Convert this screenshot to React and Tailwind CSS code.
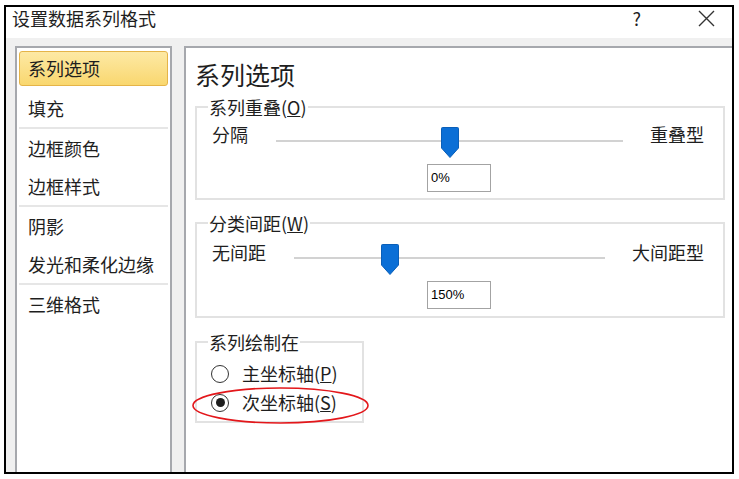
const font = { fontFamily: '"Noto Sans CJK SC", "Noto Sans", sans-serif' }

function Thumb() {
  return (
    <svg width="18" height="31" viewBox="0 0 18 31" className="block">
      <path d="M1.5 0.5 H16.5 Q17.5 0.5 17.5 1.5 V21 L9 30.5 L0.5 21 V1.5 Q0.5 0.5 1.5 0.5Z" fill="#0b6fd6" stroke="#0a5fb8" strokeWidth="1" />
    </svg>
  )
}

function Slider({ left, right, pos, lineTop, thumbTop, gapL, gapR }) {
  return (
    <div className="flex items-start pl-[15px] pr-[19px] text-[18px] leading-[24px] text-[#1e1e1e]">
      <span>{left}</span>
      <div className="relative flex-1 h-[24px]" style={{ marginLeft: gapL, marginRight: gapR }}>
        <div className="absolute left-0 right-0 h-[2px] bg-[#d2d2d2]" style={{ top: lineTop }} />
        <div className="absolute -translate-x-1/2" style={{ left: pos, top: thumbTop }}>
          <Thumb />
        </div>
      </div>
      <span>{right}</span>
    </div>
  )
}

function ValueBox({ value }) {
  return (
    <div className="ml-[230px] w-[64px] h-[28px] border border-[#a3a3a3] bg-white flex items-center pl-[3px] text-[13px] text-black" style={{ fontFamily: '"Liberation Sans", sans-serif' }}>
      {value}
    </div>
  )
}

function Group({ label, className, children }) {
  return (
    <fieldset className={`border-2 border-[#e2e2e2] ${className}`}>
      <legend className="ml-[11px] px-[1px] text-[18px] leading-[22px] text-[#1e1e1e]">{label}</legend>
      {children}
    </fieldset>
  )
}

function Radio({ checked, children, circled }) {
  return (
    <div className="relative flex items-center h-[29px] pl-[14px] text-[18px] text-[#1e1e1e]">
      <span className="w-[18px] h-[18px] rounded-full border border-[#333] bg-white flex items-center justify-center">
        {checked && <span className="w-[9px] h-[9px] rounded-full bg-[#1e1e1e]" />}
      </span>
      <span className="ml-[13px]">{children}</span>
      {circled && (
        <svg className="absolute left-[-5px] top-[-1px]" width="177" height="37" viewBox="0 0 177 37">
          <ellipse cx="88.5" cy="18.5" rx="87.5" ry="17.5" fill="none" stroke="#e3171b" strokeWidth="1.6" />
        </svg>
      )}
    </div>
  )
}

const groups = [
  ['系列选项', '填充'],
  ['边框颜色', '边框样式'],
  ['阴影', '发光和柔化边缘'],
  ['三维格式'],
]

export default function App() {
  return (
    <div className="w-[739px] h-[479px] bg-white overflow-hidden" style={font}>
      <div className="ml-[4px] mt-[5px] w-[730px] h-[469px] border-2 border-black flex flex-col">
        <div className="h-[31px] bg-white flex items-start pl-[6px] text-[18px] leading-[22px] text-[#1e1e1e]">
          <span>设置数据系列格式</span>
          <span className="ml-auto mr-[57px] text-[18px]">?</span>
          <svg className="mr-[17px] mt-[3px]" width="17" height="17" viewBox="0 0 17 17">
            <path d="M1 1 L16 16 M16 1 L1 16" stroke="#333" strokeWidth="1.4" />
          </svg>
        </div>
        <div className="flex-1 bg-[#f0f0f0] flex pl-[9px] pt-[8px] gap-[12px]">
          <div className="w-[157px] border-2 border-b-0 border-[#a6a8ad] bg-white px-[2px] pt-[3px] text-[18px] text-[#1e1e1e]">
            {groups.map((g, gi) => (
              <div key={gi}>
                {gi > 0 && <div className="h-[2px] bg-[#e6e6e6]" />}
                {g.map((item, i) => (
                  <div key={item} className="h-[38px] flex items-start">
                    {gi === 0 && i === 0 ? (
                      <div className="w-full h-[35px] rounded-[3px] border border-[#e5b448] bg-gradient-to-b from-[#fde9a4] to-[#f9d76e] flex items-center pl-[8px]">
                        {item}
                      </div>
                    ) : (
                      <div className="h-[38px] flex items-center pl-[9px]">{item}</div>
                    )}
                  </div>
                ))}
              </div>
            ))}
          </div>
          <div className="flex-1 border-2 border-b-0 border-r-0 border-[#a6a8ad] bg-white pl-[9px] pr-[7px] pt-[10px]">
            <div className="text-[25px] leading-[32px] text-[#1e1e1e]">系列选项</div>
            <Group label={<>系列重叠(<u>O</u>)</>} className="mt-[6px] pt-[4px] pb-[6px]">
              <Slider left="分隔" right="重叠型" pos="50%" lineTop={18} thumbTop={5} gapL={28} gapR={27} />
              <div className="mt-[18px]">
                <ValueBox value="0%" />
              </div>
            </Group>
            <Group label={<>分类间距(<u>W</u>)</>} className="mt-[12px] pt-[6px] pb-[7px]">
              <Slider left="无间距" right="大间距型" pos="31%" lineTop={17} thumbTop={4} gapL={28} gapR={27} />
              <div className="mt-[17px]">
                <ValueBox value="150%" />
              </div>
            </Group>
            <Group label="系列绘制在" className="mt-[13px] w-[169px] pt-[6px] pb-[4px]">
              <Radio>主坐标轴(<u>P</u>)</Radio>
              <Radio checked circled>次坐标轴(<u>S</u>)</Radio>
            </Group>
          </div>
        </div>
      </div>
    </div>
  )
}
